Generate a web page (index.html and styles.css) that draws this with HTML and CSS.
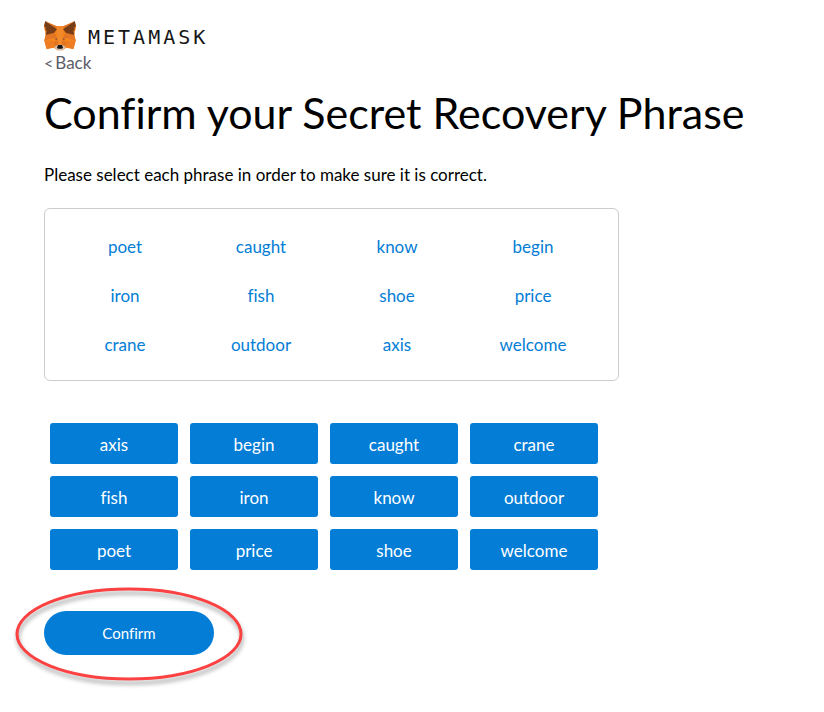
FILE: index.html
```html
<!DOCTYPE html>
<html lang="en">
<head>
<meta charset="utf-8">
<meta name="viewport" content="width=device-width, initial-scale=1">
<title>Confirm your Secret Recovery Phrase</title>
<link rel="stylesheet" href="styles.css">
</head>
<body>
<header class="brand">
  <svg class="fox" viewBox="0 0 96 90" aria-hidden="true">
    <path fill="#f5841f" d="M3 2 37 15H59L93 2 96 18 91 41 95 58 88 84 66 80 56 88H40L30 80 8 84 1 58 5 41 0 18Z"/>
    <path fill="#e27625" d="M5 42 31 33 40 54 26 51 1 60Z M91 42 65 33 56 54 70 51 95 60Z"/>
    <path fill="#763d16" d="M4 0 39 24 31 35 5 42 8 29 3 25 6 20 0 16Z M92 0 57 24 65 35 91 42 88 29 93 25 90 20 96 16Z"/>
    <path fill="#e27625" d="M4 0 38 16 40 25Z M92 0 58 16 56 25Z"/>
    <path fill="#ee7d22" d="M1 61H27L30 78 8 85Z M95 61H69L66 78 88 85Z"/>
    <path fill="#f28a2c" d="M38 16H58L55 35 53 68H43L41 35Z"/>
    <path fill="#e4751f" d="M28 62 41 57 43 70 31 78Z M68 62 55 57 53 70 65 78Z"/>
    <path fill="#765039" d="M32 54 38 52 40 57Z M64 54 58 52 56 57Z"/>
    <path fill="#d7c1b3" d="M31 77 43 71H53L65 77 56 88H40Z"/>
    <path fill="#161616" d="M42 72H54L57 80 54 83H42L39 80Z"/>
  </svg>
  <span class="wordmark">METAMASK</span>
</header>
<main>
  <a class="back" href="#"><span class="chevron">&lt;</span>Back</a>
  <h1>Confirm your Secret Recovery Phrase</h1>
  <p class="hint">Please select each phrase in order to make sure it is correct.</p>
  <ol class="phrase">
    <li>poet</li><li>caught</li><li>know</li><li>begin</li>
    <li>iron</li><li>fish</li><li>shoe</li><li>price</li>
    <li>crane</li><li>outdoor</li><li>axis</li><li>welcome</li>
  </ol>
  <div class="words">
    <button type="button">axis</button><button type="button">begin</button><button type="button">caught</button><button type="button">crane</button>
    <button type="button">fish</button><button type="button">iron</button><button type="button">know</button><button type="button">outdoor</button>
    <button type="button">poet</button><button type="button">price</button><button type="button">shoe</button><button type="button">welcome</button>
  </div>
  <div class="action">
    <button class="confirm" type="button">Confirm</button>
    <svg class="ring" viewBox="0 0 240 104" aria-hidden="true">
      <ellipse cx="120" cy="52" rx="112" ry="45"/>
    </svg>
  </div>
</main>
</body>
</html>
```
FILE: styles.css
```css
* {
  box-sizing: border-box;
}

body {
  min-height: 100vh;
  margin: 0;
  padding: 20px 44px;
  background: #fff;
  color: #000;
  font-family: Lato, "Liberation Sans", sans-serif;
  font-size: 17px;
  font-variant-ligatures: none;
  line-height: 24px;
}

.brand {
  display: flex;
  align-items: center;
  gap: 12px;
}

.fox {
  width: 32px;
  height: 32px;
}

.wordmark {
  padding-top: 2px;
  color: #161616;
  font-family: "DejaVu Sans Mono", monospace;
  font-size: 20px;
  letter-spacing: 3px;
}

.back {
  display: flex;
  gap: 2px;
  width: fit-content;
  line-height: 22px;
  color: #5b5d67;
  text-decoration: none;
}

.chevron {
  font-size: 16px;
}

h1 {
  margin: 11px 0 22px;
  font-size: 43px;
  font-weight: 400;
  line-height: 56px;
}

.hint {
  margin: 0 0 21px;
}

.phrase {
  display: grid;
  grid-template-columns: repeat(4, 1fr);
  row-gap: 25px;
  max-width: 575px;
  margin: 0 0 42px;
  padding: 26px 17px 23px 12px;
  border: 1px solid #cdcdcd;
  border-radius: 6px;
  color: #037dd6;
  list-style: none;
  text-align: center;
}

.words {
  display: grid;
  grid-template-columns: repeat(4, 1fr);
  gap: 12px;
  max-width: 560px;
  padding: 0 6px;
  margin-bottom: 41px;
}

button {
  border: 0;
  background: #037dd6;
  color: #fff;
  font: inherit;
  cursor: pointer;
}

.words button {
  height: 41px;
  padding: 2px 8px 0;
  border-radius: 3px;
}

.action {
  position: relative;
  width: fit-content;
}

.confirm {
  display: block;
  min-width: 170px;
  height: 44px;
  border-radius: 22px;
  font-size: 15px;
}

.ring {
  position: absolute;
  top: -29px;
  left: -35px;
  width: 240px;
  height: 104px;
  overflow: visible;
  pointer-events: none;
  fill: none;
  stroke: #fb4141;
  stroke-width: 3px;
  filter: drop-shadow(1px 4px 2px rgba(0, 0, 0, 0.35));
}
```
